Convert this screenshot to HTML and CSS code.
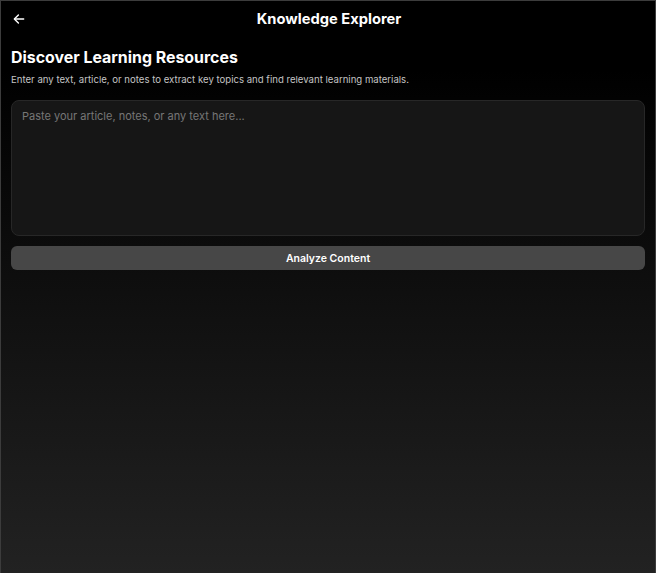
FILE: index.html
```html
<!DOCTYPE html>
<html lang="en">
<head>
<meta charset="utf-8">
<title>Knowledge Explorer</title>
<link rel="stylesheet" href="styles.css">
</head>
<body>
<div class="app">
  <header class="topbar">
    <button class="back" aria-label="Back">
      <svg width="14" height="14" viewBox="0 0 24 24" fill="none" stroke="#fff" stroke-width="2.4" stroke-linecap="round" stroke-linejoin="round"><path d="M20 12H5"/><path d="M11 5l-7 7 7 7"/></svg>
    </button>
    <h1 class="title">Knowledge Explorer</h1>
    <span class="spacer"></span>
  </header>
  <main class="content">
    <h2 class="heading">Discover Learning Resources</h2>
    <p class="subtitle">Enter any text, article, or notes to extract key topics and find relevant learning materials.</p>
    <textarea class="input" placeholder="Paste your article, notes, or any text here..."></textarea>
    <button class="analyze">Analyze Content</button>
  </main>
</div>
</body>
</html>
```
FILE: styles.css
```css
* { box-sizing: border-box; }
html, body { margin: 0; height: 100%; background: #000; }
body { font-family: Inter, "Noto Sans", sans-serif; color: #fff; }
.app {
  height: 573px;
  border: 1px solid #3c3c3c;
  border-bottom: none;
  background: linear-gradient(to bottom, #000 0%, #000 12%, #222 100%);
  display: flex;
  flex-direction: column;
}
.topbar {
  height: 35px;
  display: flex;
  align-items: center;
  padding: 0 8px 0 10px;
}
.back {
  width: 16px; height: 16px;
  padding: 0; border: 0; background: none;
  display: flex; align-items: center; justify-content: center;
}
.spacer { width: 16px; }
.title {
  flex: 1;
  margin: 0;
  text-align: center;
  font-size: 14.7px;
  font-weight: 700;
}
.content {
  padding: 11px 10px 10px;
  display: flex;
  flex-direction: column;
}
.heading {
  margin: 0;
  font-size: 15.9px;
  font-weight: 700;
  line-height: 22px;
}
.subtitle {
  margin: 4px 0 0;
  font-size: 9.6px;
  line-height: 14px;
  color: #c4c4c4;
}
.input {
  margin-top: 13px;
  height: 136px;
  resize: none;
  background: #161616;
  border: 1px solid #272727;
  border-radius: 8px;
  padding: 8px 10px;
  font-family: inherit;
  font-size: 11px;
  color: #ddd;
  outline: none;
}
.input::placeholder { color: #767676; }
.analyze {
  margin-top: 10px;
  height: 24px;
  border: 0;
  border-radius: 6px;
  background: #474747;
  color: #fff;
  font-family: inherit;
  font-size: 10.5px;
  font-weight: 600;
}
```
